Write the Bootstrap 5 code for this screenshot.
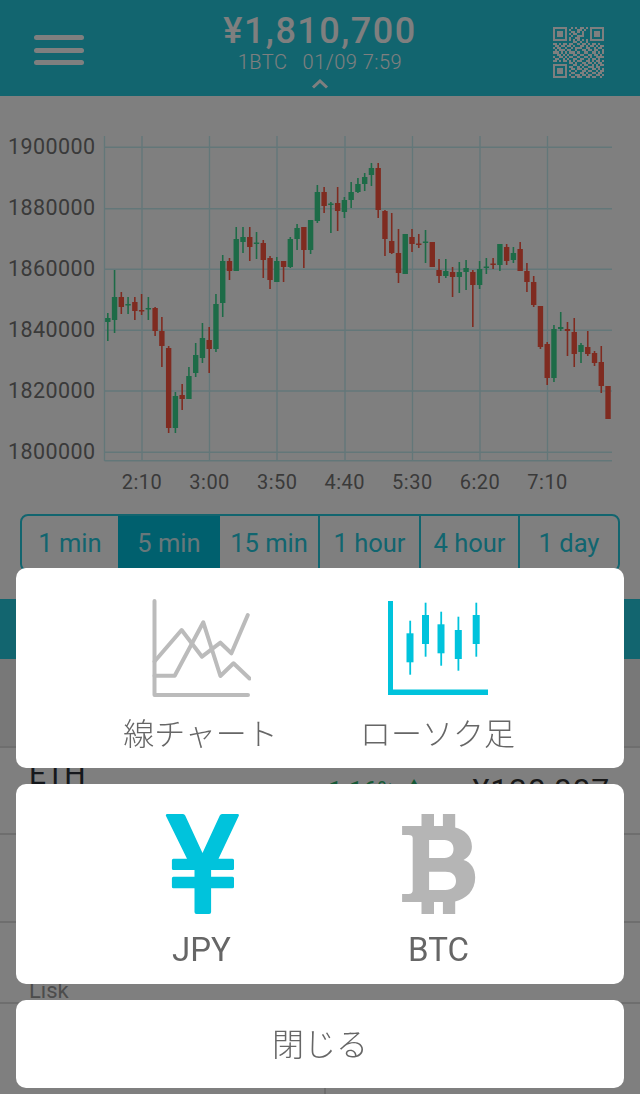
<!DOCTYPE html>
<html lang="ja">
<head>
  <meta charset="UTF-8" />
  <meta name="viewport" content="width=device-width, initial-scale=1.0" />
  <title>BTC Chart</title>
  <link href="https://cdn.jsdelivr.net/npm/bootstrap@5.3.3/dist/css/bootstrap.min.css" rel="stylesheet" />
  <style>
    html, body { height: 1094px; overflow: hidden; }
    body { font-family: Roboto, "Noto Sans CJK JP", sans-serif; background: #fff; color: #333; }

    .top-bar { height: 96px; background: #24cade; color: #fff; }
    .top-side { flex: 0 0 110px; }
    .burger { width: 50px; height: 30px; margin: 35px 0 0 34px; }
    .burger span { display: block; height: 5px; border-radius: 3px; background: #fff; }
    .qr-box { width: 51px; height: 51px; margin: 27px 36px 0 0; }
    .price-now { font-size: 36px; font-weight: 500; letter-spacing: 1.5px; line-height: 42px; padding-top: 10px; box-sizing: content-box; }
    .price-sub { font-size: 20px; font-weight: 300; line-height: 21px; letter-spacing: .5px; }
    .price-sub span { margin-right: 15px; }
    .chev { display: block; margin: 6px auto 0; }

    .chart-area { display: block; width: 640px; height: 418px; }
    .chart-area text { font-family: Roboto, sans-serif; fill: #747474; }
    .axis-y { font-size: 21.5px; letter-spacing: .4px; }
    .axis-x { font-size: 20px; letter-spacing: .5px; }

    .range-wrap { margin: 0 20px; height: 85px; }
    .range-tabs { display: flex; height: 58px; border: 2px solid #24cade; border-radius: 8px; overflow: hidden; }
    .range-tab { font-size: 25.5px; line-height: 54px; text-align: center; color: #24cade; border-left: 2px solid #24cade; white-space: nowrap; }
    .range-tab:first-child { border-left: 0; }
    .range-tab:nth-child(1) { flex: 0 0 96px; }
    .range-tab:nth-child(2) { flex: 0 0 102px; border-left: 0; }
    .range-tab:nth-child(3) { flex: 0 0 98px; border-left: 0; }
    .range-tab:nth-child(4) { flex: 0 0 101px; }
    .range-tab:nth-child(5) { flex: 0 0 99px; }
    .range-tab:nth-child(6) { flex: 1 1 0; }
    .range-tab.on { background: #00c0dc; color: #cfeff4; }

    .teal-band { height: 60px; background: #24cade; }
    .list-head { height: 89px; background: #f0f0f0; border-bottom: 2px solid #ddd; }
    .coin-row { border-bottom: 2px solid #ddd; padding: 0 30px; }
    .coin-a { height: 87px; padding-top: 8px; }
    .coin-b { height: 88px; }
    .coin-c { height: 81px; padding-top: 56px; }
    .coin-name { font-size: 30px; line-height: 36px; color: #2b3138; margin-left: -1px; }
    .coin-change { font-size: 25px; line-height: 36px; color: #2fb36d; margin-top: 18px; margin-left: auto; margin-right: 46px; }
    .coin-price { font-size: 32px; line-height: 36px; color: #333; margin-top: 16px; letter-spacing: .8px; }
    .coin-sub { font-size: 22px; line-height: 24px; color: #999; margin-left: -1px; }
    .foot-tabs { height: 91px; }
    .foot-tabs div { width: 326px; height: 91px; border-right: 2px solid #ddd; }

    .sheet { z-index: 1060; padding: 0 16px 6px; }
    .sheet-card { background: #fff; border-radius: 10px; }
    .sheet-pick { height: 200px; padding-top: 30px; }
    .pick-nudge { padding-right: 2px; }
    .pick-item { width: 237px; color: #666; }
    .pick-item svg { display: block; }
    .pick-jp { font-family: "Noto Sans CJK JP", sans-serif; font-size: 31px; font-weight: 300; line-height: 40px; margin-top: 14px; }
    .pick-en { font-size: 33px; line-height: 40px; margin-top: 16px; }
    .sheet-close { height: 88px; line-height: 84px; font-family: "Noto Sans CJK JP", sans-serif; font-size: 32px; font-weight: 300; color: #666; }
  </style>
</head>
<body>

  <header class="top-bar d-flex">
    <div class="top-side d-flex">
      <div class="burger d-flex flex-column justify-content-between"><span></span><span></span><span></span></div>
    </div>
    <div class="flex-grow-1 text-center">
      <div class="price-now">¥1,810,700</div>
      <div class="price-sub"><span>1BTC</span>01/09 7:59</div>
      <svg class="chev" width="18" height="10" viewBox="0 0 18 10"><path d="M2 8.5 9 2l7 6.5" fill="none" stroke="#fff" stroke-width="3"/></svg>
    </div>
    <div class="top-side d-flex justify-content-end">
      <svg class="qr-box" id="qr" viewBox="0 0 25 25" shape-rendering="crispEdges"></svg>
    </div>
  </header>

  <svg class="chart-area" id="chart" viewBox="0 96 640 418"></svg>

  <div class="range-wrap">
    <div class="range-tabs">
      <div class="range-tab">1 min</div>
      <div class="range-tab on">5 min</div>
      <div class="range-tab">15 min</div>
      <div class="range-tab">1 hour</div>
      <div class="range-tab">4 hour</div>
      <div class="range-tab">1 day</div>
    </div>
  </div>

  <div class="teal-band"></div>
  <div class="list-head"></div>
  <div class="coin-row coin-a d-flex">
    <div class="coin-name">ETH</div>
    <div class="coin-change">+1.16% ▲</div>
    <div class="coin-price">¥130,007</div>
  </div>
  <div class="coin-row coin-b"></div>
  <div class="coin-row coin-c"><div class="coin-sub">Lisk</div></div>
  <div class="foot-tabs"><div></div></div>

  <div class="modal-backdrop show"></div>

  <div class="sheet position-fixed bottom-0 start-0 end-0 d-flex flex-column gap-3">
    <div class="sheet-card sheet-pick pick-nudge d-flex justify-content-center">
      <div class="pick-item d-flex flex-column align-items-center">
        <svg width="100" height="100" viewBox="151 598 100 100">
          <g fill="none" stroke="#bbb" stroke-width="4" stroke-linejoin="round" stroke-linecap="round">
            <path d="M154.5 601V695H248"/>
            <path d="M154.5 661.5 181.6 630 202 656.7 220.4 642.7 231.4 653.3 247.8 615"/>
            <path d="M154.5 675.7H174.7L203.3 622.3 220.4 676 233.5 663.3 249.5 678.5"/>
          </g>
        </svg>
        <div class="pick-jp">線チャート</div>
      </div>
      <div class="pick-item d-flex flex-column align-items-center">
        <svg width="100" height="100" viewBox="388.5 598 100 100">
          <g fill="#00c3dc">
            <path d="M388.5 601H393.5V689.5H488.5V695H388.5Z"/>
            <rect x="407" y="633.3" width="7" height="29"/><rect x="409.8" y="620.7" width="1.8" height="54"/>
            <rect x="422.5" y="615" width="7" height="29"/><rect x="425.2" y="602.7" width="1.8" height="54"/>
            <rect x="438" y="624.3" width="7" height="29"/><rect x="440.8" y="611.7" width="1.8" height="54"/>
            <rect x="455.3" y="630" width="7" height="29"/><rect x="458" y="616.7" width="1.8" height="54"/>
            <rect x="473.2" y="615" width="7" height="29"/><rect x="475.9" y="602.7" width="1.8" height="54"/>
          </g>
        </svg>
        <div class="pick-jp">ローソク足</div>
      </div>
    </div>

    <div class="sheet-card sheet-pick d-flex justify-content-center">
      <div class="pick-item d-flex flex-column align-items-center">
        <svg width="100" height="100" viewBox="151.5 814 100 100">
          <path fill="#00c3dc" d="M167 814H182.5Q184 814 184.7 815.5L202 853 219.3 815.5Q220 814 221.5 814H237Q239 814 238.2 816L218 858.7H232Q233.5 858.7 233.5 860.2V868.5Q233.5 870 232 870H210.6V876.7H232Q233.5 876.7 233.5 878.2V886.8Q233.5 888.3 232 888.3H210.6V912Q210.6 914 208.6 914H196Q194 914 194 912V888.3H172.9Q171.4 888.3 171.4 886.8V878.2Q171.4 876.7 172.9 876.7H194V870H172.9Q171.4 870 171.4 868.5V860.2Q171.4 858.7 172.9 858.7H186.5L165.5 816Q164.8 814 167 814Z"/>
        </svg>
        <div class="pick-en">JPY</div>
      </div>
      <div class="pick-item d-flex flex-column align-items-center">
        <svg width="100" height="100" viewBox="388.5 814 100 100">
          <path fill="#b5b5b5" fill-rule="evenodd" d="M421 814H433.5V826H442.4V814H454.7V827.5C464 830 471.4 836 471.4 846.5C471.4 852.5 468.5 857 463 860C471 862.5 474.7 869 474.7 877.5C474.7 891 465.5 899 454.7 901.5V914H442.4V902H433.5V914H421V902H401.6V894H408C411 894 412.2 892.5 412.2 890V838C412.2 836 411 835 408 835H401.6V826H421ZM428.6 840V858H444C449.5 858 453 854.5 453 849C453 843.5 449.5 840 444 840ZM428.6 871.7V890H445C451.5 890 455.5 886.5 455.5 881C455.5 875 451.5 871.7 445 871.7Z"/>
        </svg>
        <div class="pick-en">BTC</div>
      </div>
    </div>

    <div class="sheet-card sheet-close text-center">閉じる</div>
  </div>

  <script src="https://cdn.jsdelivr.net/npm/bootstrap@5.3.3/dist/js/bootstrap.bundle.min.js"></script>
  <script>
    // g/r, wick top, wick bottom, body top, body bottom (page px)
    const candles = [
      ['g',313,341,318,322],['g',270,333,297,320],['r',292,314,297,307],['g',297,314,304,305.5],['r',297,320,302,311],
      ['r',294,315,310,311.5],['g',297,320,308,309.5],['r',307,336,308,331],['r',317,367,331,346],['r',346,433,348,428],
      ['g',392,433,396,428],['r',384,410,395,399],['g',367,399,376,399],['g',343,377,355,373],['g',323,363,338,358],
      ['r',327,373,340,349],['g',294,352,304,349],['g',255,317,261,303],['r',258,280,261,271],['g',227,271,239,271],
      ['g',227,253,237,242],['r',227,261,237,247],['g',232,259,242.5,244],['r',240,278,243,260],['r',256,289,258,280],
      ['g',257,282,261,282],['r',261,282,261,267],['g',237,268,239,267],['g',224,250,228,239],['r',227,268,227,250],
      ['g',220,254,220,250],['g',185,223,192,221],['r',187,213,192,206],['g',202,233,203.5,205],['r',187,231,203,211],
      ['g',197,218,200,212],['g',182,208,192,200],['g',178,193,184,192],['g',173,191,177,184],['g',163,186,168,175],
      ['r',163,218,168,210],['r',210,256,211,239],['r',213,254,241,253],['r',229,283,253,273],['g',234,274,234,274],
      ['r',229,252,237,244],['r',234,248,243.5,245],['g',230,263,241.5,243],['r',242,267,242,267],['r',259,283,270,276],
      ['g',259,278,271,276],['r',267,297,272,277],['g',262,293,272,277],['g',260,290,268,272],['r',270,327,272,285],
      ['g',261,289,269,285],['g',258,274,266.5,268],['r',258,269,263.5,265],['g',244,271,244,265],['r',244,265,247,261],
      ['g',247,263,253,260],['r',242,271,249,271],['r',263,292,271,282],['r',276,307,282,305],['r',306,349,306,347],
      ['r',342,385,344,378],['g',325,382,329,378],['g',312,331,327,329],['r',322,356,329,331],['r',318,367,332,354],
      ['g',343,363,345,352],['r',331,356,347,354],['r',351,366,353,363],['r',346,393,362,386],['r',386,419,386,419]
    ];
    const green = '#3ad68e', red = '#ff5640', gridLine = '#c6eef3';
    let chart = '';

    [147.3, 208.7, 269.3, 330.3, 391, 452.3, 460.7].forEach(y => {
      chart += `<line x1="104.5" x2="612" y1="${y}" y2="${y}" stroke="${gridLine}" stroke-width="1.4"/>`;
    });
    [104.5, 142, 209.5, 277, 345, 412.5, 480, 547.5].forEach(x => {
      chart += `<line x1="${x}" x2="${x}" y1="136" y2="461" stroke="${gridLine}" stroke-width="1.4"/>`;
    });
    candles.forEach((c, i) => {
      const x = 107.8 + i * 6.76, col = c[0] === 'g' ? green : red;
      chart += `<rect x="${x - .8}" y="${c[1]}" width="1.6" height="${c[2] - c[1]}" fill="${col}"/>`;
      chart += `<rect x="${x - 2.7}" y="${c[3]}" width="5.4" height="${c[4] - c[3]}" fill="${col}"/>`;
    });
    ['1900000', '1880000', '1860000', '1840000', '1820000', '1800000'].forEach((t, i) => {
      chart += `<text class="axis-y" x="8" y="${153.5 + i * 61}">${t}</text>`;
    });
    ['2:10', '3:00', '3:50', '4:40', '5:30', '6:20', '7:10'].forEach((t, i) => {
      chart += `<text class="axis-x" x="${142 + i * 67.6}" y="489" text-anchor="middle">${t}</text>`;
    });
    document.getElementById('chart').innerHTML = chart;

    const qrRows = [
      '1111111001010110101111111','1000001010001101001000001','1011101001101010001011101',
      '1011101010110010001011101','1011101001001110001011101','1000001010011000001000001',
      '1111111010101010101111111','0000000000110100100000000','1101011011001011010110100',
      '0110110110100110101101011','1011001001011100110010110','0101110110010011011011001',
      '1110101011101001100110101','0011010100110110011011010','1001101011001001101001111',
      '0110010100110110010110100','1101011010101100110101101','0000000011010011011010110',
      '1111111000110101100101011','1000001011001010011101100','1011101001101101100110101',
      '1011101010010011011001011','1011101001100110100110110','1000001010011011011001101',
      '1111111001101100110110010'
    ];
    let qr = '';
    qrRows.forEach((row, y) => {
      [...row].forEach((v, x) => { if (v === '1') qr += `<rect x="${x}" y="${y}" width="1" height="1" fill="#fff"/>`; });
    });
    document.getElementById('qr').innerHTML = qr;
  </script>
</body>
</html>
